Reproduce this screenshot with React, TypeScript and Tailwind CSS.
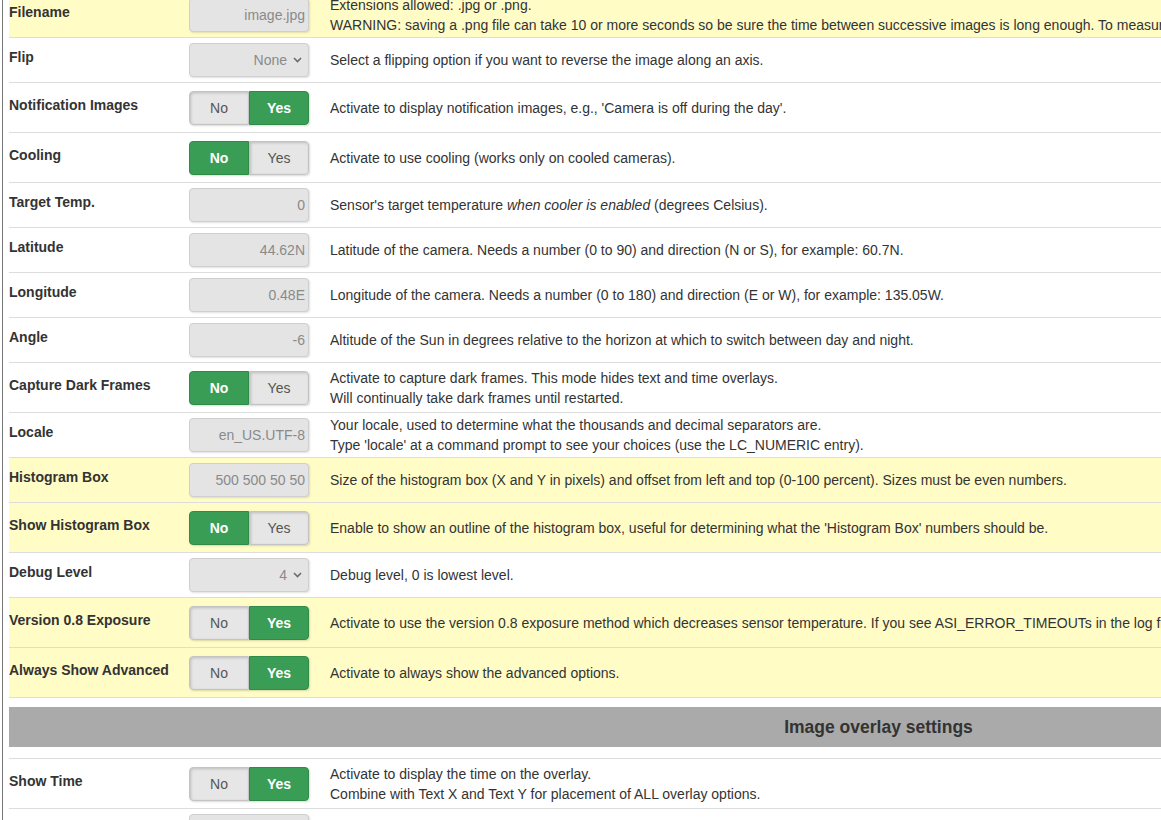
import React from 'react';

type Control =
  | { kind: 'input'; value: string }
  | { kind: 'select'; value: string }
  | { kind: 'toggle'; value: 'No' | 'Yes' };

type Setting = {
  label: string;
  control: Control;
  highlight?: boolean;
  desc: React.ReactNode[];
};

const settings: Setting[] = [
  {
    label: 'Filename',
    highlight: true,
    control: { kind: 'input', value: 'image.jpg' },
    desc: [
      'Extensions allowed: .jpg or .png.',
      'WARNING: saving a .png file can take 10 or more seconds so be sure the time between successive images is long enough. To measure the time, look in the log file.',
    ],
  },
  {
    label: 'Flip',
    control: { kind: 'select', value: 'None' },
    desc: ['Select a flipping option if you want to reverse the image along an axis.'],
  },
  {
    label: 'Notification Images',
    control: { kind: 'toggle', value: 'Yes' },
    desc: ["Activate to display notification images, e.g., 'Camera is off during the day'."],
  },
  {
    label: 'Cooling',
    control: { kind: 'toggle', value: 'No' },
    desc: ['Activate to use cooling (works only on cooled cameras).'],
  },
  {
    label: 'Target Temp.',
    control: { kind: 'input', value: '0' },
    desc: [
      <>
        Sensor's target temperature <i>when cooler is enabled</i> (degrees Celsius).
      </>,
    ],
  },
  {
    label: 'Latitude',
    control: { kind: 'input', value: '44.62N' },
    desc: ['Latitude of the camera. Needs a number (0 to 90) and direction (N or S), for example: 60.7N.'],
  },
  {
    label: 'Longitude',
    control: { kind: 'input', value: '0.48E' },
    desc: ['Longitude of the camera. Needs a number (0 to 180) and direction (E or W), for example: 135.05W.'],
  },
  {
    label: 'Angle',
    control: { kind: 'input', value: '-6' },
    desc: ['Altitude of the Sun in degrees relative to the horizon at which to switch between day and night.'],
  },
  {
    label: 'Capture Dark Frames',
    control: { kind: 'toggle', value: 'No' },
    desc: [
      'Activate to capture dark frames. This mode hides text and time overlays.',
      'Will continually take dark frames until restarted.',
    ],
  },
  {
    label: 'Locale',
    control: { kind: 'input', value: 'en_US.UTF-8' },
    desc: [
      'Your locale, used to determine what the thousands and decimal separators are.',
      "Type 'locale' at a command prompt to see your choices (use the LC_NUMERIC entry).",
    ],
  },
  {
    label: 'Histogram Box',
    highlight: true,
    control: { kind: 'input', value: '500 500 50 50' },
    desc: [
      'Size of the histogram box (X and Y in pixels) and offset from left and top (0-100 percent). Sizes must be even numbers.',
    ],
  },
  {
    label: 'Show Histogram Box',
    highlight: true,
    control: { kind: 'toggle', value: 'No' },
    desc: ["Enable to show an outline of the histogram box, useful for determining what the 'Histogram Box' numbers should be."],
  },
  {
    label: 'Debug Level',
    control: { kind: 'select', value: '4' },
    desc: ['Debug level, 0 is lowest level.'],
  },
  {
    label: 'Version 0.8 Exposure',
    highlight: true,
    control: { kind: 'toggle', value: 'Yes' },
    desc: [
      'Activate to use the version 0.8 exposure method which decreases sensor temperature. If you see ASI_ERROR_TIMEOUTs in the log file, enable this setting.',
    ],
  },
  {
    label: 'Always Show Advanced',
    highlight: true,
    control: { kind: 'toggle', value: 'Yes' },
    desc: ['Activate to always show the advanced options.'],
  },
];

const overlaySettings: Setting[] = [
  {
    label: 'Show Time',
    control: { kind: 'toggle', value: 'Yes' },
    desc: [
      'Activate to display the time on the overlay.',
      'Combine with Text X and Text Y for placement of ALL overlay options.',
    ],
  },
  {
    label: 'Time Format',
    control: { kind: 'input', value: '%Y%m%d %H:%M:%S' },
    desc: ['Determines the format of the displayed time.'],
  },
];

const ChevronDown = () => (
  <svg width="9" height="6" viewBox="0 0 9 6" className="ml-[6px] shrink-0">
    <path d="M1 1 L4.5 4.5 L8 1" fill="none" stroke="#6b6b6b" strokeWidth="1.6" />
  </svg>
);

const ControlView: React.FC<{ control: Control }> = ({ control }) => {
  if (control.kind === 'input') {
    return (
      <div className="flex h-[34px] w-[120px] items-center justify-end overflow-hidden whitespace-nowrap rounded-[4px] border border-[#cfcfcf] bg-[#e4e4e4] pr-[3px] text-[14px] text-[#8a8a8a] shadow-[1px_1px_2px_rgba(0,0,0,0.12)]">
        {control.value}
      </div>
    );
  }
  if (control.kind === 'select') {
    return (
      <div className="flex h-[34px] w-[120px] items-center justify-end rounded-[4px] border border-[#cfcfcf] bg-[#e4e4e4] pr-[6px] text-[14px] text-[#8a8a8a] shadow-[1px_1px_2px_rgba(0,0,0,0.12)]">
        {control.value}
        <ChevronDown />
      </div>
    );
  }
  const half = (name: 'No' | 'Yes', side: 'l' | 'r') => {
    const active = control.value === name;
    const round = side === 'l' ? 'rounded-l-[4px]' : 'rounded-r-[4px]';
    return active ? (
      <div
        className={`flex h-[34px] w-[60px] items-center justify-center border border-[#2f8b47] bg-[#3a9d55] pt-[1px] text-[14px] font-bold text-white ${round}`}
      >
        {name}
      </div>
    ) : (
      <div
        className={`flex h-[34px] w-[60px] items-center justify-center border border-[#c4c4c4] bg-[#e6e6e6] pt-[1px] text-[14px] text-[#555] shadow-[inset_1px_1px_3px_rgba(0,0,0,0.18)] ${round}`}
      >
        {name}
      </div>
    );
  };
  return (
    <div className="flex rounded-[4px] shadow-[1px_1px_2px_rgba(0,0,0,0.15)]">
      {half('No', 'l')}
      {half('Yes', 'r')}
    </div>
  );
};

const SettingRow: React.FC<{ s: Setting }> = ({ s }) => {
  const tall = s.control.kind === 'toggle';
  return (
    <div
      className={`flex items-center border-t border-[#dddddd] ${tall ? 'h-[50px]' : 'h-[45px]'} ${
        s.highlight ? 'bg-[#fffcc6]' : 'bg-white'
      }`}
    >
      <div className="w-[180px] shrink-0 pb-[5px] text-[14px] font-bold text-[#333]">{s.label}</div>
      <div className="w-[120px] shrink-0">
        <ControlView control={s.control} />
      </div>
      <div className="whitespace-nowrap pl-[21px] text-[14px] leading-[20px] text-[#333]">
        {s.desc.map((line, i) => (
          <div key={i}>{line}</div>
        ))}
      </div>
    </div>
  );
};

const SectionHeader: React.FC<{ title: string }> = ({ title }) => (
  <div className="border-t border-[#dddddd] pt-[9px] pb-[11px]">
    <div className="flex h-[40px] items-center justify-center bg-[#aaaaaa] text-[17.5px] font-bold text-[#333]">
      {title}
    </div>
  </div>
);

const App: React.FC = () => {
  return (
    <div
      className="h-screen w-screen overflow-hidden bg-white pl-[2px]"
      style={{ fontFamily: '"Liberation Sans", Arial, sans-serif' }}
    >
      <div className="min-h-full w-[1746px] border-l border-[#777] pl-[6px]">
        <div className="-mt-[8px]">
          {settings.map((s) => (
            <SettingRow key={s.label} s={s} />
          ))}
          <SectionHeader title="Image overlay settings" />
          {overlaySettings.map((s) => (
            <SettingRow key={s.label} s={s} />
          ))}
          <div className="border-t border-[#dddddd]" />
        </div>
      </div>
    </div>
  );
};

export default App;
